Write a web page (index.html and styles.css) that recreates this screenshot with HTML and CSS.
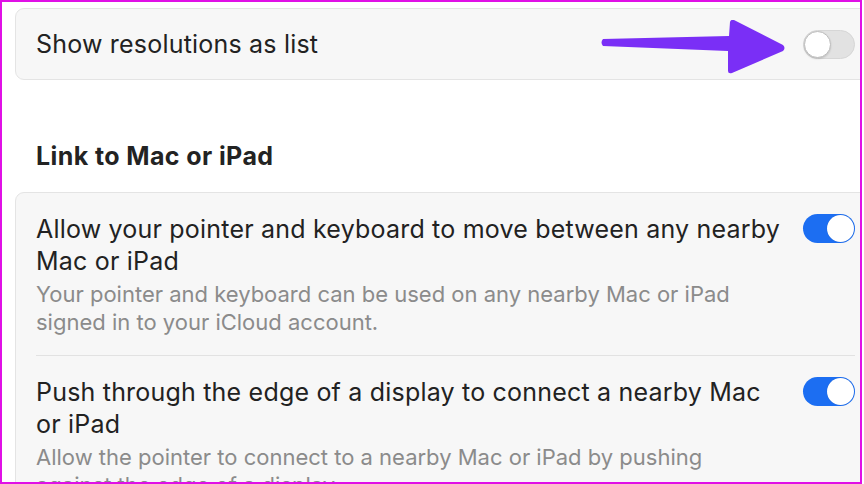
FILE: index.html
```html
<!DOCTYPE html>
<html>
<head>
<meta charset="utf-8">
<link rel="stylesheet" href="styles.css">
</head>
<body>
<div class="frame">
  <div class="card single">
    <div class="row row-center">
      <div class="text"><div class="title">Show resolutions as list</div></div>
      <div class="toggle off"><span class="knob"></span></div>
    </div>
  </div>
  <svg class="arrow" width="200" height="60" viewBox="600 20 200 60">
    <path d="M603 39 L729 36 L730 22 Q731 19 734 20 L783 45 Q786 48 783 51 L732 73 Q728 74 728 71 L728 51 L603 46 Q600 42.5 603 39 Z" fill="#7a2ff6"/>
  </svg>

  <h2 class="section">Link to Mac or iPad</h2>

  <div class="card">
    <div class="row">
      <div class="text">
        <div class="title">Allow your pointer and keyboard to move between any nearby Mac or iPad</div>
        <div class="sub">Your pointer and keyboard can be used on any nearby Mac or iPad signed in to your iCloud account.</div>
      </div>
      <div class="toggle on"><span class="knob"></span></div>
    </div>
    <div class="row divided">
      <div class="text">
        <div class="title">Push through the edge of a display to connect a nearby Mac or iPad</div>
        <div class="sub">Allow the pointer to connect to a nearby Mac or iPad by pushing against the edge of a display.</div>
      </div>
      <div class="toggle on"><span class="knob"></span></div>
    </div>
  </div>
</div>
</body>
</html>
```

FILE: styles.css
```css
html, body {
  margin: 0;
  padding: 0;
  background: #ffffff;
}
body {
  font-family: Inter, "Noto Sans", "Liberation Sans", sans-serif;
  color: #232323;
}
.frame {
  position: relative;
  box-sizing: border-box;
  width: 862px;
  height: 484px;
  border: 2px solid #e010e6;
  overflow: hidden;
  padding: 6px 0 0 13px;
}
.card {
  box-sizing: border-box;
  width: 860px;
  background: #f7f7f7;
  border: 1px solid #e4e4e4;
  border-radius: 9px;
  padding: 0 19px 0 20px;
}
.card.single {
  height: 72px;
}
.row {
  display: flex;
  align-items: flex-start;
  padding: 20px 0 19px;
}
.row.divided {
  border-top: 1px solid #e2e2e2;
  padding-top: 20px;
}
.row-center {
  align-items: center;
  height: 70px;
  padding: 0;
  box-sizing: border-box;
}
.text {
  flex: 1;
  max-width: 752px;
  margin-right: auto;
}
.title {
  font-size: 25px;
  line-height: 32px;
  color: #222222;
  letter-spacing: 0.2px;
}
.sub {
  max-width: 700px;
  font-size: 22px;
  line-height: 28px;
  color: #8b8b8b;
  margin-top: 3px;
}
.toggle {
  position: relative;
  flex: none;
  width: 52px;
  height: 29px;
  border-radius: 15px;
  box-sizing: border-box;
  margin-top: 1px;
}
.toggle.off {
  background: #e2e2e2;
  border: 1px solid #d6d6d6;
  margin-top: 0;
}
.toggle.on {
  background: #1c6ef2;
}
.knob {
  position: absolute;
  top: 1px;
  width: 27px;
  height: 27px;
  border-radius: 50%;
  background: #ffffff;
  box-sizing: border-box;
}
.off .knob {
  left: 0;
  top: 0;
  border: 1px solid #bdbdbd;
  box-shadow: 0 1px 2px rgba(0,0,0,0.15);
}
.on .knob {
  right: 1px;
  box-shadow: 0 0 1px rgba(0,0,0,0.2);
}
.section {
  margin: 0;
  padding: 60px 0 0 21px;
  height: 112px;
  box-sizing: border-box;
  font-size: 25px;
  line-height: 32px;
  font-weight: 700;
  letter-spacing: 0.4px;
  color: #232323;
}
.arrow {
  position: absolute;
  left: 598px;
  top: 18px;
}
```
